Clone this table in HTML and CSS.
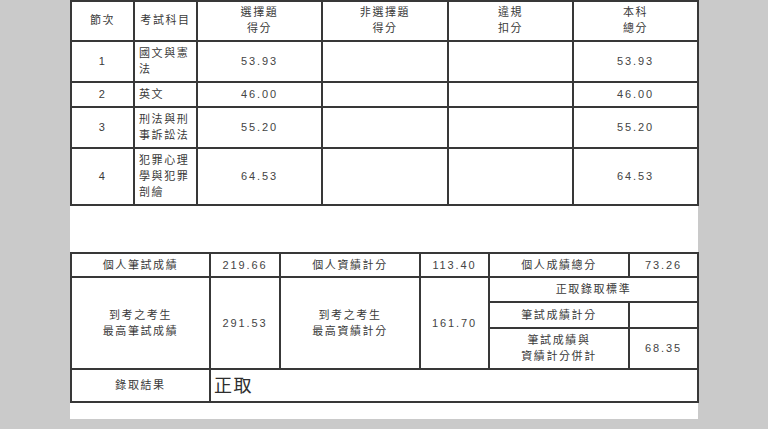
FILE: index.html
```html
<!DOCTYPE html>
<html lang="zh-Hant">
<head>
<meta charset="utf-8">
<title>成績單</title>
<link rel="stylesheet" href="styles.css">
</head>
<body>
<div class="page">
  <table class="grid scores">
    <colgroup>
      <col class="c63"><col class="c63"><col class="c125"><col class="c126"><col class="c125"><col class="c125">
    </colgroup>
    <tr class="head">
      <td>節次</td>
      <td>考試科目</td>
      <td>選擇題<br>得分</td>
      <td>非選擇題<br>得分</td>
      <td>違規<br>扣分</td>
      <td>本科<br>總分</td>
    </tr>
    <tr>
      <td>1</td>
      <td class="left">國文與憲<br>法</td>
      <td class="num">53.93</td>
      <td></td>
      <td></td>
      <td class="num">53.93</td>
    </tr>
    <tr>
      <td>2</td>
      <td class="left">英文</td>
      <td class="num">46.00</td>
      <td></td>
      <td></td>
      <td class="num">46.00</td>
    </tr>
    <tr>
      <td>3</td>
      <td class="left">刑法與刑<br>事訴訟法</td>
      <td class="num">55.20</td>
      <td></td>
      <td></td>
      <td class="num">55.20</td>
    </tr>
    <tr>
      <td>4</td>
      <td class="left">犯罪心理<br>學與犯罪<br>剖繪</td>
      <td class="num">64.53</td>
      <td></td>
      <td></td>
      <td class="num">64.53</td>
    </tr>
  </table>

  <table class="grid summary">
    <colgroup>
      <col class="c139"><col class="c70"><col class="c140"><col class="c69"><col class="c140"><col class="c69">
    </colgroup>
    <tr class="r24">
      <td>個人筆試成績</td>
      <td class="num">219.66</td>
      <td>個人資績計分</td>
      <td class="num">113.40</td>
      <td>個人成績總分</td>
      <td class="num">73.26</td>
    </tr>
    <tr>
      <td rowspan="3">到考之考生<br>最高筆試成績</td>
      <td rowspan="3" class="num">291.53</td>
      <td rowspan="3">到考之考生<br>最高資績計分</td>
      <td rowspan="3" class="num">161.70</td>
      <td colspan="2">正取錄取標準</td>
    </tr>
    <tr>
      <td class="tight">筆試成績計分</td>
      <td class="tight"></td>
    </tr>
    <tr>
      <td>筆試成績與<br>資績計分併計</td>
      <td class="num">68.35</td>
    </tr>
    <tr>
      <td>錄取結果</td>
      <td colspan="5" class="result">正取</td>
    </tr>
  </table>
</div>
</body>
</html>
```

FILE: styles.css
```css
html, body {
  margin: 0;
  padding: 0;
}

body {
  background: #cacaca;
  font-family: "Liberation Sans", "Noto Sans CJK TC", sans-serif;
  color: #3a3a3a;
}

.page {
  width: 628px;
  margin: 0 auto;
  background: #ffffff;
  padding-bottom: 16px;
}

.grid {
  width: 628px;
  border-collapse: collapse;
  table-layout: fixed;
}

.grid td {
  border: 2px solid #383838;
  padding: 3px 3px 4px;
  font-size: 11px;
  line-height: 16px;
  letter-spacing: 1.6px;
  text-align: center;
  vertical-align: middle;
}

.scores tr.head td {
  padding-top: 2px;
  padding-bottom: 4px;
}

.grid td.left {
  text-align: left;
  padding-left: 4px;
}

.grid td.num {
  letter-spacing: 1.9px;
  color: #444;
}

.c63 { width: 63px; }
.c125 { width: 125px; }
.c126 { width: 126px; }
.c139 { width: 139px; }
.c140 { width: 140px; }
.c70 { width: 70px; }
.c69 { width: 69px; }

.summary {
  margin-top: 46px;
}

.summary tr.r24 td {
  padding-top: 3px;
  padding-bottom: 3px;
}

.summary td.tight {
  padding-top: 4px;
  padding-bottom: 4px;
}

.summary td.result {
  text-align: left;
  font-size: 18px;
  line-height: 22px;
  letter-spacing: 1.5px;
  padding: 5px 3px 4px;
  color: #2e2e2e;
}
```
